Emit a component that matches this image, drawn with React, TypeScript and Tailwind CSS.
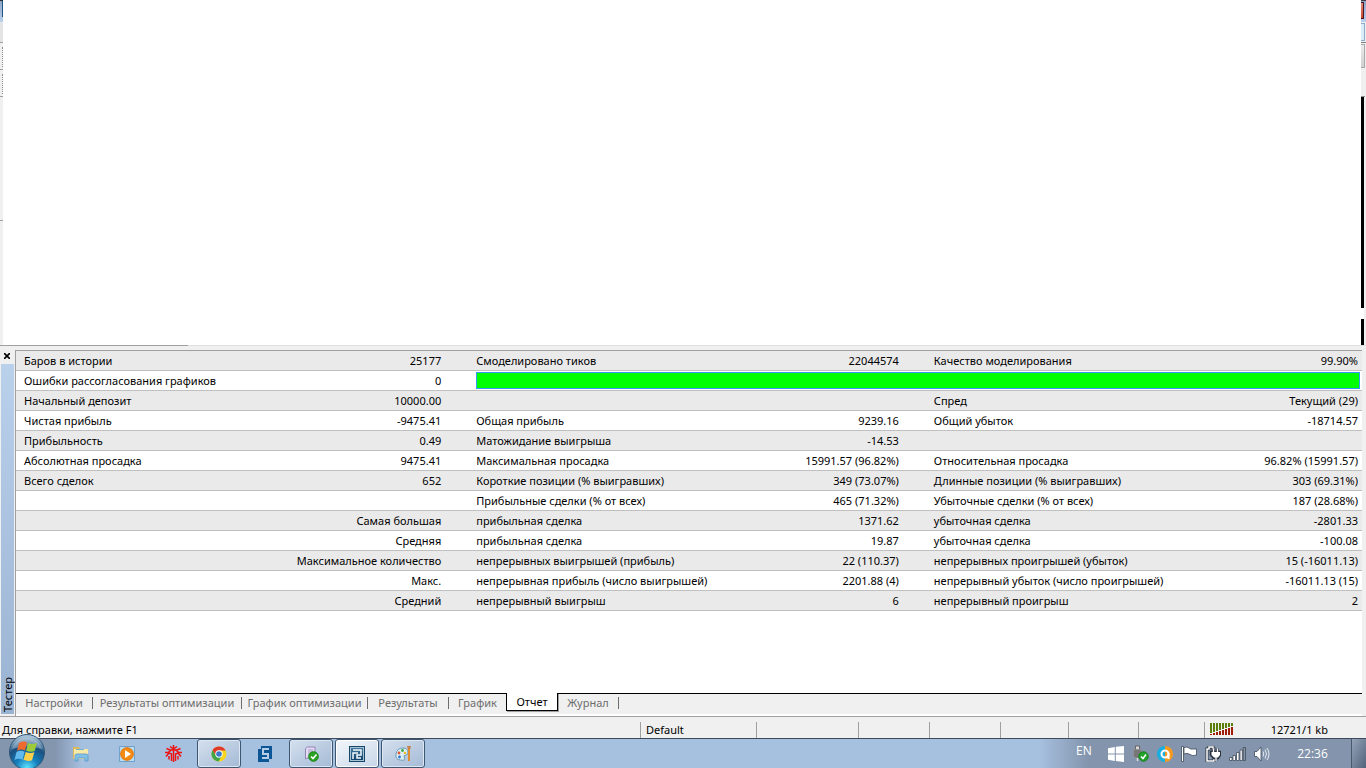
import type { ReactNode } from 'react';

type Row = {
  label?: string;
  value?: string;
  side?: string;
  cells?: string[];
};

const rows: Row[] = [
  { label: 'Баров в истории', value: '25177', cells: ['Смоделировано тиков', '22044574', 'Качество моделирования', '99.90%'] },
  { label: 'Ошибки рассогласования графиков', value: '0' },
  { label: 'Начальный депозит', value: '10000.00', cells: ['', '', 'Спред', 'Текущий (29)'] },
  { label: 'Чистая прибыль', value: '-9475.41', cells: ['Общая прибыль', '9239.16', 'Общий убыток', '-18714.57'] },
  { label: 'Прибыльность', value: '0.49', cells: ['Матожидание выигрыша', '-14.53', '', ''] },
  { label: 'Абсолютная просадка', value: '9475.41', cells: ['Максимальная просадка', '15991.57 (96.82%)', 'Относительная просадка', '96.82% (15991.57)'] },
  { label: 'Всего сделок', value: '652', cells: ['Короткие позиции (% выигравших)', '349 (73.07%)', 'Длинные позиции (% выигравших)', '303 (69.31%)'] },
  { side: '', cells: ['Прибыльные сделки (% от всех)', '465 (71.32%)', 'Убыточные сделки (% от всех)', '187 (28.68%)'] },
  { side: 'Самая большая', cells: ['прибыльная сделка', '1371.62', 'убыточная сделка', '-2801.33'] },
  { side: 'Средняя', cells: ['прибыльная сделка', '19.87', 'убыточная сделка', '-100.08'] },
  { side: 'Максимальное количество', cells: ['непрерывных выигрышей (прибыль)', '22 (110.37)', 'непрерывных проигрышей (убыток)', '15 (-16011.13)'] },
  { side: 'Макс.', cells: ['непрерывная прибыль (число выигрышей)', '2201.88 (4)', 'непрерывный убыток (число проигрышей)', '-16011.13 (15)'] },
  { side: 'Средний', cells: ['непрерывный выигрыш', '6', 'непрерывный проигрыш', '2'] },
];

const tabs = [
  { name: 'Настройки', width: 'w-[77px]' },
  { name: 'Результаты оптимизации', width: 'w-[149px]' },
  { name: 'График оптимизации', width: 'w-[126px]' },
  { name: 'Результаты', width: 'w-[81px]' },
  { name: 'График', width: 'w-[57px]' },
  { name: 'Отчет', width: 'w-[52px]' },
  { name: 'Журнал', width: 'w-[61px]' },
];

const statusCells = ['w-[102px]', 'w-[71px]', 'w-[71px]', 'w-[68px]', 'w-[70px]', 'w-[66px]'];

const ReportRow = ({ row }: { row: Row }) => (
  <tr className="h-5 odd:bg-[#eaeaea] [&>td]:border-b [&>td]:border-[#c0c0c0]">
    {row.side !== undefined ? (
      <td colSpan={2} className="pr-[27px] text-right">{row.side}</td>
    ) : (
      <>
        <td className="pl-2">{row.label}</td>
        <td className="pr-[27px] text-right">{row.value}</td>
      </>
    )}
    {row.cells ? (
      <>
        <td className="pl-2">{row.cells[0]}</td>
        <td className="pr-[27px] text-right">{row.cells[1]}</td>
        <td className="pl-2">{row.cells[2]}</td>
        <td className="pr-1 text-right">{row.cells[3]}</td>
      </>
    ) : (
      <td colSpan={4} className="pl-2 pr-[2px]">
        <div className="h-[17px] border border-[#3399ff] bg-[#00ff00]" />
      </td>
    )}
  </tr>
);

const LeftEdge = () => (
  <div className="flex w-[3px] shrink-0 flex-col bg-[#f0f0f0]">
    <div className="h-px bg-[#2d2d35]" />
    <div className="flex h-[21px] justify-end bg-linear-to-b from-[#8ea6c6] to-[#bad2ee]">
      <div className="h-4 w-px bg-[#1d5580]" />
    </div>
    <div className="h-5 bg-[#e4e4e4]" />
    <div className="h-px bg-[#a0a0a0]" />
    <div className="h-1 bg-[#f0f0f0]" />
    <div className="ml-[2px] h-5 border-l border-dotted border-[#909090]" />
    <div className="mt-[2px] h-px bg-[#a0a0a0]" />
    <div className="ml-[2px] mt-1 h-5 border-l border-dotted border-[#909090]" />
    <div className="mt-[2px] h-px bg-[#a0a0a0]" />
    <div className="mt-[123px] h-px bg-[#a0a0a0]" />
  </div>
);

const RightEdge = () => (
  <div className="flex w-[5px] shrink-0 flex-col bg-[#f0f0f0]">
    <div className="h-px bg-[#3b3b45]" />
    <div className="h-[21px] bg-linear-to-b from-[#8ea6c6] to-[#bad2ee] pt-px">
      <div className="h-[17px] w-[3px] border-y border-r border-[#4a1525] bg-linear-to-b from-[#e08a78] to-[#c8452c]" />
    </div>
    <div className="mt-px h-[18px] w-1 border-y border-r border-[#8cabc8] bg-[#dcecfb]" />
    <div className="mt-px h-px bg-[#808080]" />
    <div className="mt-px h-6 w-1 border-y border-r border-[#a8a8a8] bg-linear-to-b from-[#ececec] to-[#d0d0d0]" />
    <div className="mt-7 h-px w-1 bg-[#909090]" />
    <div className="h-[211px] w-[3px] bg-black" />
    <div className="h-[11px] w-[3px] bg-white" />
    <div className="w-[3px] flex-1 bg-black" />
  </div>
);

const StartOrb = () => (
  <svg width="38" height="34" viewBox="0 0 38 34">
    <defs>
      <radialGradient id="orb" cx="0.5" cy="0.95" r="0.9">
        <stop offset="0" stopColor="#5fe3ff" />
        <stop offset="0.35" stopColor="#1480bd" />
        <stop offset="0.7" stopColor="#1b4f80" />
        <stop offset="1" stopColor="#a9c4d8" />
      </radialGradient>
    </defs>
    <circle cx="19" cy="18" r="17.5" fill="url(#orb)" stroke="#2c5676" />
    <path d="M4 15a15.500 15.500 0 0 1 30 0Q19 10 4 15Z" fill="#fff" opacity="0.28" />
    <path d="M11 9q4.500-2.500 8-.5l-2 8q-4.500-2-8 .5z" fill="#ef6a2d" />
    <path d="M20 9q4 2 9 0l-2.300 8q-4 1.500-8.500-.3z" fill="#9ccb3b" />
    <path d="M8.500 18q4-2.300 8-.3l-2 8q-4-1.800-8 .3z" fill="#62b9ee" />
    <path d="M17.700 18q4.300 2 8.600.3l-2.300 8q-4 1.500-8.500-.5z" fill="#fdd04a" />
  </svg>
);

const ExplorerIcon = () => (
  <svg width="18" height="16" viewBox="0 0 18 16">
    <path d="M1 1h6l1 2h8v10H1z" fill="#dcb95a" />
    <path d="M2 3h14v10H2z" fill="#f8e9a6" />
    <path d="M4 3.500h8" stroke="#71b3d2" />
    <path d="M3 15V9.500Q3 8 5 8h9q2 0 2 1.500V15h-3v-3H6v3z" fill="#82c1e8" stroke="#5898c7" strokeWidth="0.8" />
  </svg>
);

const PlayerIcon = () => (
  <svg width="16" height="16" viewBox="0 0 16 16">
    <path d="M.5.5h15v15H.5z" fill="#b8dcf2" stroke="#6fa2cb" />
    <circle cx="8" cy="8" r="6.300" fill="#f58a12" stroke="#e67407" />
    <path d="M6 4 12 8 6 12z" fill="#fff" />
  </svg>
);

const RedTreeIcon = () => (
  <svg width="17" height="17" viewBox="0 0 17 17" fill="none" stroke="#ee1010" strokeWidth="1.500">
    <path d="M8.500 0v17" />
    <path d="M5 1.500 8.500 4 12 1.500" />
    <path d="M1.500 3.500 5 5h7l3.500-1.500" />
    <path d="M0 7.500h3L6.500 5M17 7.500h-3L10.500 5" />
    <path d="M6.500 16V9L4 8 1 11.500M10.500 16V9L13 8l3 3.500" />
    <path d="M4 14.500V11M13 14.500V11" />
  </svg>
);

const ChromeIcon = () => (
  <svg width="16" height="16" viewBox="0 0 16 16">
    <circle cx="8" cy="8" r="7.500" fill="#f9d51d" />
    <path d="M1.500 4.200A7.500 7.500 0 0 1 14.600 4.500H8L4.900 9.800z" fill="#de3a2b" />
    <path d="M1.500 4.200A7.500 7.500 0 0 0 7.500 15.500L11 9.800 5 9.800z" fill="#3fa648" />
    <circle cx="8" cy="8" r="3.700" fill="#fff" />
    <circle cx="8" cy="8" r="2.800" fill="#3a79c9" />
  </svg>
);

const BlueSIcon = () => (
  <svg width="14" height="16" viewBox="0 0 14 16" shapeRendering="crispEdges">
    <path d="M3 0h11v13h-3v3H0V3h3z" fill="#0c5696" />
    <path d="M11 3H5v5h5v4H4" fill="none" stroke="#b4cce6" strokeWidth="2" />
  </svg>
);

const CheckDocIcon = () => (
  <svg width="15" height="16" viewBox="0 0 15 16">
    <path d="M1.500 2.500 3.500 1H11v11H3l-1.500 1z" fill="#e4dcf2" stroke="#9385b5" />
    <path d="M4 4h5M4 6h5M4 8h3" stroke="#a79ac7" />
    <circle cx="9.500" cy="10.500" r="4.800" fill="#2aa321" stroke="#168516" />
    <path d="m7 10.500 2 2 3.500-4" fill="none" stroke="#fff" strokeWidth="1.600" />
  </svg>
);

const BlueRIcon = () => (
  <svg width="16" height="16" viewBox="0 0 16 16">
    <defs>
      <linearGradient id="term" x2="0" y2="1">
        <stop stopColor="#4d7da1" />
        <stop offset="1" stopColor="#0b3d66" />
      </linearGradient>
    </defs>
    <rect x="0.500" y="0.500" width="15" height="15" fill="url(#term)" stroke="#174768" />
    <rect x="1.500" y="1.500" width="13" height="13" fill="none" stroke="#a7c4d6" />
    <path d="M4 4h8v5H8v3h4M4 13V7h5" fill="none" stroke="#f4faff" strokeWidth="1.500" />
  </svg>
);

const PaintIcon = () => (
  <svg width="17" height="17" viewBox="0 0 17 17">
    <path d="M1 9q1-6 7-6 5 0 5 5 0 2-2.500 2t-1 3-4 2Q0 14.500 1 9z" fill="#dceef5" stroke="#6e9cb5" />
    <circle cx="4" cy="8" r="1.400" fill="#e4572c" />
    <circle cx="7.500" cy="5.500" r="1.400" fill="#3eaa48" />
    <circle cx="4.500" cy="12" r="1.400" fill="#2e77cb" />
    <circle cx="10" cy="8" r="1.300" fill="#f1bc23" />
    <path d="M12 1h4l-1 4h-2z" fill="#c5834b" />
    <path d="M14 4v12" stroke="#e58b2f" strokeWidth="2" />
  </svg>
);

const WindowsTrayIcon = () => (
  <svg width="16" height="16" viewBox="0 0 16 16" fill="#fff">
    <path d="M0 2.200 6.800 1v6.500H0zM7.800.8 16 0v7.500H7.800zM0 8.500h6.800V15L0 13.800zM7.800 8.500H16V16l-8.200-.9z" />
  </svg>
);

const UsbTrayIcon = () => (
  <svg width="17" height="17" viewBox="0 0 17 17">
    <path d="M3.500 1h4v4h-4z" fill="#d8d8d8" stroke="#666" />
    <path d="M1.500 4.500h8V11l-2 2h-4l-2-2z" fill="#777" stroke="#999" strokeWidth="0.600" />
    <path d="M5.500 13v3" stroke="#ddd" strokeWidth="1.500" />
    <circle cx="11.500" cy="11.500" r="4.700" fill="#22a42b" stroke="#138018" />
    <path d="m9 11.500 2 2 3-4" fill="none" stroke="#fff" strokeWidth="1.500" />
  </svg>
);

const AvastTrayIcon = () => (
  <svg width="16" height="16" viewBox="0 0 16 16">
    <path d="M8 0a8 8 0 0 0 0 16z" fill="#18aee0" />
    <path d="M8 0a8 8 0 0 1 0 16z" fill="#f79a1d" />
    <circle cx="8" cy="8" r="3.500" fill="none" stroke="#fff" strokeWidth="2" />
    <path d="M11.500 7v6" stroke="#fff" strokeWidth="2" />
  </svg>
);

const FlagTrayIcon = () => (
  <svg width="16" height="16" viewBox="0 0 16 16" fill="#fff" stroke="#3f4b5c" strokeWidth="0.800">
    <path d="M.5.500h2v15h-2z" />
    <path d="M3 1.500q3-1 5 .5t3 1h4.500v6q-4 1.500-6.500-.5T3 8z" />
  </svg>
);

const PowerTrayIcon = () => (
  <svg width="16" height="16" viewBox="0 0 16 16" fill="none">
    <path d="M2 3h2V1h4v2h1v12H2z" stroke="#2b333e" strokeWidth="3" />
    <path d="M2 3h2V1h4v2h1v12H2z" stroke="#fff" strokeWidth="1.500" />
    <path d="M6 6h9v3l-2 3h-4L6 9zM8.500 6V2.500M12.500 6V2.500M11 12v3" stroke="#2b333e" strokeWidth="2.500" />
    <path d="M6.500 6H15v3l-2 2.500H9L6.500 9z" fill="#fff" />
    <path d="M8.500 6V2.500M12.500 6V2.500M11 11v4" stroke="#fff" strokeWidth="1.300" />
  </svg>
);

const SignalTrayIcon = () => (
  <svg width="17" height="14" viewBox="0 0 17 14" fill="#fff" stroke="#414c5b" strokeWidth="0.800">
    <path d="M.5 10.500h2.500v3H.5zM4 8.500h2.500v5H4zM7.500 5.500H10v8H7.500zM11 3h2.300v10.500H11z" />
    <path d="M14.200.500h2.300v13h-2.300z" fill="#8793a5" />
  </svg>
);

const SpeakerTrayIcon = () => (
  <svg width="16" height="16" viewBox="0 0 16 16">
    <path d="M.5 5.500H3l4-4.500v14L3 10.500H.5z" fill="#fff" stroke="#414c5b" strokeWidth="0.800" />
    <path d="M9 5.500q1.500 2.500 0 5M11 3.500q3 4.500 0 9M13 2q4 6 0 12" fill="none" stroke="#e8edf3" />
  </svg>
);

type TaskButtonProps = { title: string; open?: boolean; active?: boolean; children: ReactNode };

const TaskButton = ({ title, open, active, children }: TaskButtonProps) => {
  let look = 'border-transparent';
  if (open) look = 'border-[#3f5670] bg-linear-to-br from-[#d5e0ee] to-[#a4bad6] shadow-[inset_0_0_0_1px_#dce7f3]';
  if (active) look = 'border-[#3f5670] bg-linear-to-br from-[#f4f7fb] to-[#c6d6e8] shadow-[inset_0_0_0_1px_#ffffff]';
  return (
    <button aria-label={title} className={`flex h-[29px] w-11 items-center justify-center rounded-[3px] border ${look}`}>
      {children}
    </button>
  );
};

const TrafficBars = () => (
  <svg width="24" height="13" viewBox="0 0 24 13">
    {[10, 9, 8, 7, 6, 5, 4, 3].map((h, i) => (
      <g key={h}>
        <rect x={i * 3} y="0" width="2" height={h} fill="#5c7d0a" />
        <rect x={i * 3} y={h + 1} width="2" height={12 - h - 1} fill="#a01c06" />
      </g>
    ))}
  </svg>
);

const App = () => (
  <div className="flex h-screen flex-col overflow-hidden bg-[#f0f0f0] font-['Noto_Sans',sans-serif] text-[11px] leading-4 text-black">
    {/* CHART AREA */}
    <div className="flex min-h-0 flex-1">
      <LeftEdge />
      <main className="flex-1 bg-white" />
      <RightEdge />
    </div>

    {/* TESTER */}
    <section className="flex h-[371px] shrink-0 flex-col">
      <div className="h-px bg-[#e0e0e0]">
        <div className="h-px w-[188px] bg-[#a0a0a0]" />
      </div>
      <div className="mt-1 flex min-h-0 flex-1">
        <div className="mb-[2px] flex w-[15px] shrink-0 flex-col pl-px">
          <button aria-label="Закрыть" className="flex h-[14px] items-start justify-center pr-[2px] pt-[3px]">
            <svg width="6" height="6" viewBox="0 0 6 6" stroke="#000" strokeWidth="1.600">
              <path d="m0 0 6 6M6 0 0 6" />
            </svg>
          </button>
          <div className="mr-px flex flex-1 items-end justify-center bg-linear-to-b from-[#bad1ec] to-[#9ab3d2] pb-[2px]">
            <span className="rotate-180 [writing-mode:vertical-rl]">Тестер</span>
          </div>
        </div>
        <div className="mr-1 flex flex-1 flex-col border-l border-t border-[#a0a0a0]">
          <div className="min-h-0 flex-1 bg-white">
            <table className="w-full table-fixed border-separate border-spacing-0">
              <colgroup>
                <col className="w-[22%]" />
                <col className="w-[11.6%]" />
                <col className="w-[22%]" />
                <col className="w-[12%]" />
                <col className="w-[20%]" />
                <col />
              </colgroup>
              <tbody>
                {rows.map((row, i) => (
                  <ReportRow key={i} row={row} />
                ))}
              </tbody>
            </table>
          </div>
          <nav className="flex h-[23px] shrink-0 border-b-2 border-white">
            {tabs.map((tab) =>
              tab.name === 'Отчет' ? (
                <button key={tab.name} className={`flex h-[18px] items-center justify-center border-x border-b border-black bg-white shadow-[1px_1px_0_#a0a0a0] ${tab.width}`}>
                  {tab.name}
                </button>
              ) : (
                <button key={tab.name} className={`flex h-[18px] items-center justify-center border-t border-black text-[#6d6d6d] ${tab.width}`}>
                  <span className="flex-1">{tab.name}</span>
                  {tab.name !== 'График' && <span className="h-3 w-px bg-[#6d6d6d]" />}
                </button>
              ),
            )}
            <div className="flex-1 border-t border-black" />
          </nav>
        </div>
      </div>
    </section>

    {/* STATUS BAR */}
    <footer className="flex h-[22px] shrink-0 items-center border-t border-[#a0a0a0] pt-1">
      <span className="flex-1 pl-[2px]">Для справки, нажмите F1</span>
      <span className="w-[116px] border-l border-[#a0a0a0] pl-[5px]">Default</span>
      {statusCells.map((width, i) => (
        <span key={i} className={`h-4 border-l border-[#a0a0a0] ${width}`} />
      ))}
      <span className="flex w-[162px] items-center border-l border-[#a0a0a0] pl-[5px]">
        <TrafficBars />
        <span className="flex-1 pr-[38px] text-right">12721/1 kb</span>
      </span>
    </footer>

    {/* TASKBAR */}
    <div className="flex h-[30px] shrink-0 border-t border-[#3c4a5c] bg-linear-to-r from-[#8495ae] from-4% via-[#a6c0df] via-6% to-[#a6c0df] font-['Open_Sans',sans-serif]">
      <button aria-label="Пуск" className="-mt-[5px] ml-2 h-[34px] w-[38px]">
        <StartOrb />
      </button>
      <div className="ml-[13px] flex flex-1 gap-[2px]">
        <TaskButton title="Проводник"><ExplorerIcon /></TaskButton>
        <TaskButton title="Проигрыватель"><PlayerIcon /></TaskButton>
        <TaskButton title="Терминал"><RedTreeIcon /></TaskButton>
        <TaskButton title="Chrome" open><ChromeIcon /></TaskButton>
        <TaskButton title="S"><BlueSIcon /></TaskButton>
        <TaskButton title="Отчеты" open><CheckDocIcon /></TaskButton>
        <TaskButton title="Тестер" open active><BlueRIcon /></TaskButton>
        <TaskButton title="Paint" open><PaintIcon /></TaskButton>
      </div>
      <div className="flex w-[326px] items-center bg-linear-to-r from-[#a6c0df] to-[#8394ac] to-15% text-xs text-white">
        <span className="w-[68px] pb-[6px] pl-9">EN</span>
        <div className="flex items-center gap-2">
          <WindowsTrayIcon />
          <UsbTrayIcon />
          <AvastTrayIcon />
          <FlagTrayIcon />
          <PowerTrayIcon />
          <SignalTrayIcon />
          <SpeakerTrayIcon />
        </div>
        <span className="flex-1 pl-1 text-center">22:36</span>
        <button aria-label="Свернуть все окна" className="h-full w-[15px] border-l border-[#4a586b] bg-linear-to-br from-[#94a3b8] to-[#53647a]" />
      </div>
    </div>
  </div>
);

export default App;
